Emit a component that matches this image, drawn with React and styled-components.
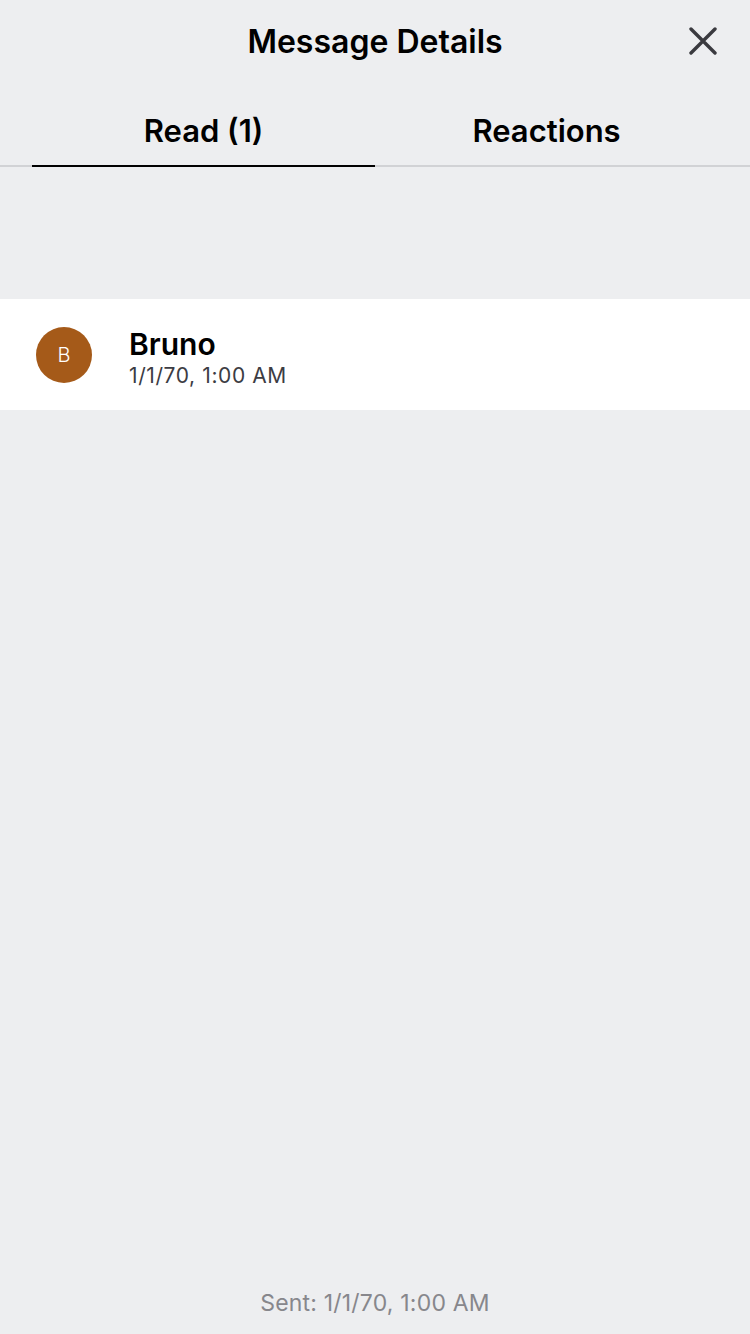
import styled, { createGlobalStyle } from 'styled-components';

const GlobalStyle = createGlobalStyle`
  html, body {
    margin: 0;
    padding: 0;
    background: #edeef0;
  }
  body {
    font-family: Inter, "Noto Sans", "Liberation Sans", sans-serif;
    -webkit-font-smoothing: antialiased;
  }
`;

const Screen = styled.div`
  display: flex;
  flex-direction: column;
  min-height: 1334px;
  background: #edeef0;
`;

const Header = styled.div`
  position: relative;
  height: 82px;
  display: flex;
  align-items: center;
  justify-content: center;
`;

const Title = styled.h1`
  margin: 0;
  font-size: 32px;
  font-weight: 600;
  color: #000;
  letter-spacing: 0;
`;

const CloseButton = styled.button`
  position: absolute;
  right: 33px;
  top: 27px;
  width: 28px;
  height: 28px;
  padding: 0;
  border: none;
  background: none;
  display: flex;
  align-items: center;
  justify-content: center;
`;

const Tabs = styled.div`
  display: flex;
  height: 83px;
  border-bottom: 2px solid #d1d2d5;
  padding: 0 0 0 32px;
`;

const Tab = styled.div`
  flex: 0 0 ${p => p.$w}px;
  display: flex;
  align-items: center;
  justify-content: center;
  font-size: 31px;
  font-weight: 600;
  color: #000;
  letter-spacing: 0;
  padding-top: 14px;
  box-sizing: border-box;
  margin-bottom: -2px;
  border-bottom: 2px solid ${p => (p.$active ? '#000' : 'transparent')};
`;

const Spacer = styled.div`
  height: 132px;
`;

const Row = styled.div`
  display: flex;
  align-items: center;
  height: 111px;
  background: #fff;
  padding-left: 36px;
`;

const Avatar = styled.div`
  width: 56px;
  height: 56px;
  border-radius: 50%;
  background: #a55a19;
  color: #fff;
  display: flex;
  align-items: center;
  justify-content: center;
  font-size: 20px;
  font-weight: 300;
  margin-right: 37px;
`;

const Info = styled.div`
  display: flex;
  flex-direction: column;
  padding-top: 6px;
`;

const Name = styled.div`
  font-size: 30px;
  font-weight: 600;
  color: #000;
  line-height: 34px;
`;

const Stamp = styled.div`
  font-size: 21px;
  color: #3c3c43;
  letter-spacing: 0.6px;
  line-height: 26px;
  margin-top: 2px;
`;

const Fill = styled.div`
  flex: 1;
`;

const Footer = styled.div`
  text-align: center;
  font-size: 23px;
  color: #87878c;
  letter-spacing: 0.2px;
  padding-bottom: 17px;
`;

export default function App() {
  return (
    <Screen>
      <GlobalStyle />
      <Header>
        <Title>Message Details</Title>
        <CloseButton aria-label="Close">
          <svg width="28" height="28" viewBox="0 0 28 28">
            <path d="M2 2 L26 26 M26 2 L2 26" stroke="#3a3a3f" strokeWidth="3.4" strokeLinecap="round" />
          </svg>
        </CloseButton>
      </Header>
      <Tabs>
        <Tab $active $w={343}>Read (1)</Tab>
        <Tab $w={343}>Reactions</Tab>
      </Tabs>
      <Spacer />
      <Row>
        <Avatar>B</Avatar>
        <Info>
          <Name>Bruno</Name>
          <Stamp>1/1/70, 1:00 AM</Stamp>
        </Info>
      </Row>
      <Fill />
      <Footer>Sent: 1/1/70, 1:00 AM</Footer>
    </Screen>
  );
}
